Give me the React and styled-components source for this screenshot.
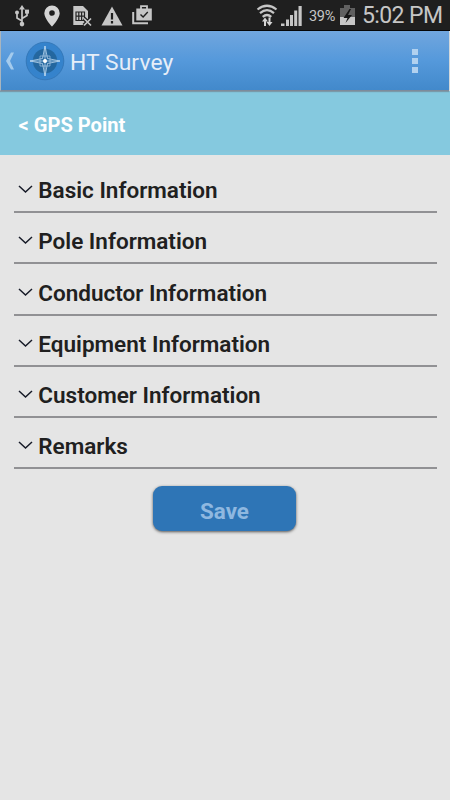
import React from "react";
import styled, { createGlobalStyle } from "styled-components";

const GlobalStyle = createGlobalStyle`
  * { box-sizing: border-box; }
  body { margin: 0; background: #e5e5e5; font-family: Roboto, "Liberation Sans", sans-serif; }
`;

const Screen = styled.div`
  width: 450px;
  height: 800px;
  display: flex;
  flex-direction: column;
  background: #e5e5e5;
  overflow: hidden;
`;

const StatusBar = styled.div`
  height: 31px;
  flex: none;
  display: flex;
  align-items: flex-start;
  padding: 0 0 0 14px;
  background: #1f1f1f;
  border-bottom: 1px solid #050505;
  color: #c6c6c6;
`;

const Glyph = styled.svg`
  display: block;
  flex: none;
  width: ${(p) => p.$w}px;
  height: 30px;
  margin-left: ${(p) => p.$gap || 0}px;
`;

const Percent = styled.span`
  width: 28px;
  margin-left: 7px;
  font-size: 14.5px;
  line-height: 33px;
  letter-spacing: -0.3px;
  white-space: nowrap;
`;

const Clock = styled.span`
  margin-left: 7px;
  font-size: 23px;
  line-height: 31px;
  letter-spacing: -0.6px;
  white-space: nowrap;
`;

const ActionBar = styled.header`
  height: 60px;
  flex: none;
  display: flex;
  align-items: center;
  gap: 10px;
  padding: 0 31px 0 5px;
  margin-right: 1px;
  background: linear-gradient(#71a6de, #5599db 50%, #4289cb);
  border-left: 1px solid #a9b5be;
  border-bottom: 1px solid #7e8b9a;
  box-shadow: 0 1px 1px #7a9aa9;
  z-index: 1;
`;

const AppTitle = styled.h1`
  margin: 3px auto 0 -5px;
  font-size: 22.8px;
  font-weight: 400;
  letter-spacing: 0.1px;
  color: #e6eef8;
`;

const Overflow = styled.div`
  display: flex;
  flex-direction: column;
  gap: 3px;
  margin-top: 1px;
`;

const Square = styled.i`
  width: 6px;
  height: 6px;
  background: #b1d1ef;
`;

const SubHeader = styled.nav`
  height: 64px;
  flex: none;
  padding: 20px 0 0 18.5px;
  line-height: 28px;
  font-size: 20.1px;
  font-weight: 700;
  color: #fff;
  background: #85c9df;
`;

const Sections = styled.main`
  padding: 7px 13px 0 14px;
`;

const Section = styled.div`
  height: 51.2px;
  display: flex;
  align-items: flex-end;
  padding: 0 0 7px 4px;
  border-bottom: 2px solid #919194;
`;

const Chevron = styled.svg`
  width: 15px;
  height: 10px;
  flex: none;
  margin: 0 5.3px 10px 0;
`;

const Label = styled.span`
  font-size: 22.5px;
  line-height: 28px;
  font-weight: 600;
  color: #202020;
`;

const SaveButton = styled.button`
  display: block;
  width: 143px;
  height: 45px;
  margin: 17px 0 0 153px;
  padding: 4px 0 0;
  border: 0;
  border-radius: 9px;
  background: #2e75b6;
  box-shadow: 0 1px 3px #555;
  font: 700 22.4px Roboto, "Liberation Sans", sans-serif;
  color: #8fb8e0;
`;

const Compass = () => (
  <svg width="40" height="40" viewBox="0 0 40 40">
    <circle cx="20" cy="20" r="18.8" fill="#3583cc" stroke="#3478b9" strokeWidth="1" />
    <circle cx="20" cy="20" r="12.2" fill="#24679f" />
    <g fill="none" stroke="#b9d5ed" strokeWidth=".8">
      <path d="M20 5 22.500 17.500 35 20 22.500 22.500 20 35 17.500 22.500 5 20 17.500 17.500Z" />
      <path d="M20 5V35M5 20H35" />
      <path d="M15 15h10v10H15z" strokeWidth=".6" />
    </g>
    <circle cx="20" cy="20" r="2" fill="#fff" />
  </svg>
);

const rows = [
  "Basic Information",
  "Pole Information",
  "Conductor Information",
  "Equipment Information",
  "Customer Information",
  "Remarks",
];

export default function App() {
  return (
    <>
      <GlobalStyle />
      <Screen>
        <StatusBar>
          <Glyph $w={16} viewBox="14 -0.6 16 30" fill="#c6c6c6">
            <path d="M22 4.500 25 9h-6z" />
            <path d="M22 8v15M22 20.500l-5-3v-5M22 18l5-3v-4" fill="none" stroke="#c6c6c6" strokeWidth="1.700" />
            <circle cx="17" cy="12" r="2" /><path d="M25 9h4v4h-4z" /><circle cx="22" cy="23.500" r="2.300" />
          </Glyph>
          <Glyph $w={18} $gap={14} viewBox="44 0 18 30" fill="#d4d4d4">
            <path fillRule="evenodd" d="M52 5.500a7.700 7.700 0 0 0-7.700 7.700C44.300 18.500 52 26.500 52 26.500s7.700-8 7.700-13.300A7.700 7.700 0 0 0 52 5.500Zm0 4.700a2.800 2.800 0 1 1 0 5.600 2.800 2.800 0 0 1 0-5.600Z" />
          </Glyph>
          <Glyph $w={21} $gap={10} viewBox="72 0 21 30">
            <path d="M73.300 6h9.700l5 5v14H73.300z" fill="#c6c6c6" />
            <path d="M76 12h8.500v8.500H76zM78.800 12v8.500M81.600 12v8.500M76 16.200h8.500" fill="none" stroke="#252525" strokeWidth="1.200" />
            <path d="m84 18.500 7 7m0-7-7 7" stroke="#1f1f1f" strokeWidth="4" />
            <path d="m84 18.500 7 7m0-7-7 7" stroke="#c6c6c6" strokeWidth="1.700" />
          </Glyph>
          <Glyph $w={22} $gap={8} viewBox="101 0 22 30">
            <path d="m112 6.500 10.500 19h-21z" fill="#c6c6c6" />
            <path d="M112 13v6.500M112 21v2.500" stroke="#1f1f1f" strokeWidth="2.200" />
          </Glyph>
          <Glyph $w={22} $gap={9} viewBox="132 0 22 30">
            <path d="M133.200 12v11.300H148" fill="none" stroke="#c6c6c6" strokeWidth="2" />
            <path d="M136.300 8.500h15.500v12h-15.500z" fill="#c6c6c6" />
            <path d="M141 9V6.200h6V9" fill="none" stroke="#c6c6c6" strokeWidth="1.800" />
            <path d="m140.500 14.500 2.600 2.500 4.700-5" fill="none" stroke="#1f1f1f" strokeWidth="1.400" />
          </Glyph>
          <Glyph $w={22} $gap={102} viewBox="256 0 22 30">
            <g fill="none" stroke="#c6c6c6" strokeWidth="2.200">
              <path d="M257.500 9.500q9.500-7.500 19 0M260 13.200q7-6 14 0M262.700 16.800q4.300-3.600 8.600 0" />
            </g>
            <path d="M262 21.500l3-4 3 4h-2v4.500h-2v-4.500zM266.500 22h2v-4.500h2V22h2l-3 4z" fill="#d5d5d5" />
          </Glyph>
          <Glyph $w={21} $gap={3} viewBox="281 0 21 30" fill="#c6c6c6">
            <path d="M281 23.500h3.500v2.500H281zM286 19.500h3V26h-3zM290 15h3v11h-3zM294.200 10.500h3V26h-3zM298.500 6h3.200v20h-3.200z" />
          </Glyph>
          <Percent>39%</Percent>
          <Glyph $w={15} $gap={3} viewBox="340 0 15 30">
            <path d="M344 5h6v3h5v10h-15V8h4z" fill="#606060" />
            <path d="M340 17h15v8h-15z" fill="#c6c6c6" />
            <path d="m349.500 9-6 9h4l-2 5 6.500-8h-4l3-6z" fill="#151515" />
          </Glyph>
          <Clock>5:02 PM</Clock>
        </StatusBar>
        <ActionBar>
          <svg width="9" height="20" viewBox="0 0 9 20">
            <path d="M5 1.500h3L4 10l4 8.500H5L0 10z" fill="#a4cbed" />
          </svg>
          <Compass />
          <AppTitle>HT Survey</AppTitle>
          <Overflow><Square /><Square /><Square /></Overflow>
        </ActionBar>
        <SubHeader>&lt; GPS Point</SubHeader>
        <Sections>
          {rows.map((name) => (
            <Section key={name}>
              <Chevron viewBox="0 0 15 10"><path d="m1 2 6.500 6L14 2" fill="none" stroke="#171b28" strokeWidth="1.500" /></Chevron>
              <Label>{name}</Label>
            </Section>
          ))}
        </Sections>
        <SaveButton>Save</SaveButton>
      </Screen>
    </>
  );
}
